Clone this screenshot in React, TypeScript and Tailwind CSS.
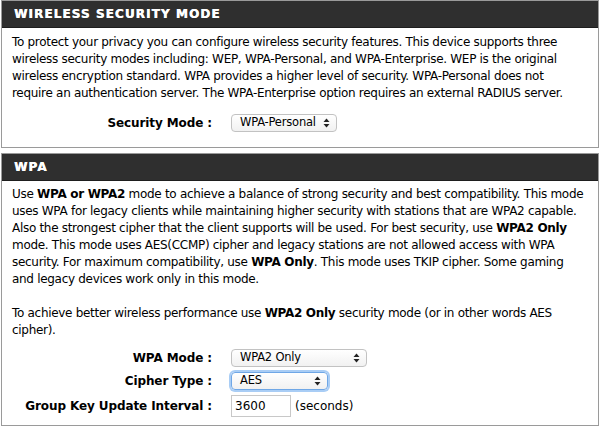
import React from "react";

function Chevrons() {
  return (
    <svg width="7" height="10" viewBox="0 0 7 10" className="shrink-0">
      <path d="M3.5 0.5 L6.5 4 L0.5 4 Z" fill="#222" />
      <path d="M3.5 9.5 L6.5 6 L0.5 6 Z" fill="#222" />
    </svg>
  );
}

function Select({ label, width, focus }: { label: string; width: string; focus?: boolean }) {
  return (
    <div
      className={`${width} h-[18px] flex items-center justify-between pl-[8px] pr-[6px] rounded-[4px] bg-gradient-to-b from-white to-[#f1f1f1] border ${
        focus ? "border-[#6fa7e6] shadow-[0_0_0_2px_#a9cdf5]" : "border-[#c2c2c2]"
      } text-[11.5px] tracking-[-0.2px] text-black leading-none whitespace-nowrap`}
    >
      <span>{label}</span>
      <Chevrons />
    </div>
  );
}

function Header({ title }: { title: string }) {
  return (
    <div className="h-[27px] bg-[#2f2f2f] flex items-center px-[12px] border-b border-[#1e1e1e]">
      <span className="text-white font-bold text-[12px] tracking-[1.1px] [text-shadow:0.4px_0_0_#fff]">
        {title}
      </span>
    </div>
  );
}

export default function App() {
  return (
    <div className="w-[600px] h-[428px] bg-white px-[1px] font-['DejaVu_Sans',sans-serif] text-black flex flex-col gap-[5px]">
      <div className="border border-[#9a9a9a] h-[148px] flex flex-col">
        <Header title="WIRELESS SECURITY MODE" />
        <p className="px-[10px] pt-[6px] text-[12px] leading-[17px] tracking-[-0.3px] whitespace-nowrap">
          To protect your privacy you can configure wireless security features. This device supports three
          <br />
          wireless security modes including: WEP, WPA-Personal, and WPA-Enterprise. WEP is the original
          <br />
          wireless encryption standard. WPA provides a higher level of security. WPA-Personal does not
          <br />
          require an authentication server. The WPA-Enterprise option requires an external RADIUS server.
        </p>
        <div className="flex items-center mt-[12px]">
          <div className="w-[210px] text-right font-bold text-[12px] tracking-[-0.1px]">Security Mode :</div>
          <div className="ml-[19px]">
            <Select label="WPA-Personal" width="w-[106px]" />
          </div>
        </div>
      </div>

      <div className="border border-[#9a9a9a] flex-1 mb-[2px] flex flex-col">
        <Header title="WPA" />
        <div className="px-[10px] pt-[5px] text-[12px] leading-[17px] tracking-[-0.3px] whitespace-nowrap">
          <p>
            Use <b>WPA or WPA2</b> mode to achieve a balance of strong security and best compatibility. This mode
            <br />
            uses WPA for legacy clients while maintaining higher security with stations that are WPA2 capable.
            <br />
            Also the strongest cipher that the client supports will be used. For best security, use <b>WPA2 Only</b>
            <br />
            mode. This mode uses AES(CCMP) cipher and legacy stations are not allowed access with WPA
            <br />
            security. For maximum compatibility, use <b>WPA Only</b>. This mode uses TKIP cipher. Some gaming
            <br />
            and legacy devices work only in this mode.
          </p>
          <p className="mt-[17px]">
            To achieve better wireless performance use <b>WPA2 Only</b> security mode (or in other words AES
            <br />
            cipher).
          </p>
        </div>
        <div className="flex flex-col mt-[9px] gap-[4px]">
          <div className="flex items-center h-[19px]">
            <div className="w-[210px] text-right font-bold text-[12px] tracking-[-0.1px]">WPA Mode :</div>
            <div className="ml-[19px]">
              <Select label="WPA2 Only" width="w-[136px]" />
            </div>
          </div>
          <div className="flex items-center h-[19px]">
            <div className="w-[210px] text-right font-bold text-[12px] tracking-[-0.1px]">Cipher Type :</div>
            <div className="ml-[19px]">
              <Select label="AES" width="w-[97px]" focus />
            </div>
          </div>
          <div className="flex items-center h-[24px]">
            <div className="w-[210px] text-right font-bold text-[12px] tracking-[-0.1px]">
              Group Key Update Interval :
            </div>
            <div className="ml-[19px] flex items-center">
              <div className="w-[60px] h-[22px] border border-[#c8c8c8] bg-white flex items-center pl-[3px] text-[12px]">
                3600
              </div>
              <span className="ml-[4px] text-[12px]">(seconds)</span>
            </div>
          </div>
        </div>
      </div>
    </div>
  );
}
